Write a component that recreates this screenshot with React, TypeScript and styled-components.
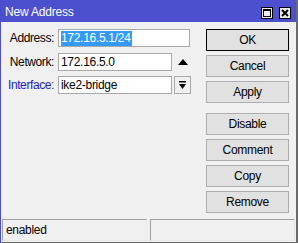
import React from "react";
import styled, { createGlobalStyle } from "styled-components";

const Global = createGlobalStyle`
  html, body { margin: 0; padding: 0; background: #f0f0f0; }
  body { font-family: "Liberation Sans", Arial, sans-serif; font-size: 11px; color: #000; }
`;

const Window = styled.div`
  width: 298px;
  height: 243px;
  box-sizing: border-box;
  background: #f0f0f0;
  border-left: 1px solid #4a4ec9;
  border-right: 2px solid #6a6a6a;
  border-bottom: 1px solid #6a6a6a;
  display: flex;
  flex-direction: column;
  overflow: hidden;
`;

const TitleBar = styled.div`
  height: 22px;
  flex: none;
  background: #4c50cf;
  display: flex;
  align-items: center;
  padding: 0 0 0 5px;
  margin-left: -1px;
  margin-right: -2px;
`;

const Title = styled.div`
  flex: 1;
  color: #fff;
  font-size: 12px;
  letter-spacing: -0.2px;
  padding-top: 1px;
`;

const TitleButtons = styled.div`
  display: flex;
  gap: 6px;
  margin-right: 7px;
  margin-top: 3px;
`;

const TitleButton = styled.div`
  width: 10px;
  height: 10px;
  border: 1px solid #000;
  background: #ececec;
  display: flex;
  align-items: center;
  justify-content: center;
`;

const Body = styled.div`
  flex: 1;
  display: flex;
  padding: 7px 0 0 0;
`;

const Form = styled.div`
  width: 203px;
  display: flex;
  flex-direction: column;
  gap: 5.5px;
`;

const Row = styled.div`
  display: flex;
  align-items: center;
  height: 18px;
`;

const Label = styled.div<{ $link?: boolean }>`
  width: 53px;
  padding-right: 4px;
  text-align: right;
  color: ${(p) => (p.$link ? "#1c1cc8" : "#000")};
  font-size: 12px;
  letter-spacing: -0.4px;
`;

const Field = styled.div<{ $w: number }>`
  width: ${(p) => p.$w}px;
  height: 18px;
  box-sizing: border-box;
  border: 1px solid #a9a9a9;
  background: #fff;
  display: flex;
  align-items: center;
  padding-left: 2px;
  font-size: 12px;
  letter-spacing: -0.3px;
`;

const Selected = styled.span`
  background: #3399ff;
  color: #fff;
  padding: 0 1px 1px 0;
`;

const Side = styled.div`
  width: 18px;
  height: 18px;
  margin-left: 2px;
  display: flex;
  align-items: center;
  justify-content: center;
`;

const DropButton = styled(Side)`
  box-sizing: border-box;
  border: 1px solid #a9a9a9;
  background: #f0f0f0;
  width: 17px;
`;

const Buttons = styled.div`
  width: 83px;
  margin-left: 2px;
  display: flex;
  flex-direction: column;
  gap: 4px;
`;

const Button = styled.div<{ $default?: boolean; $groupStart?: boolean }>`
  height: 22px;
  box-sizing: border-box;
  border: 1px solid ${(p) => (p.$default ? "#000" : "#adadad")};
  background: #e1e1e1;
  display: flex;
  align-items: center;
  justify-content: center;
  font-size: 12px;
  letter-spacing: -0.3px;
  margin-top: ${(p) => (p.$groupStart ? "6px" : "0")};
`;

const StatusBar = styled.div`
  flex: none;
  height: 22px;
  display: flex;
  gap: 3px;
  padding: 0 1px 1px 1px;
`;

const StatusCell = styled.div`
  flex: 1;
  box-sizing: border-box;
  border-top: 1px solid #a0a0a0;
  border-left: 1px solid #a0a0a0;
  border-bottom: 1px solid #e8e8e8;
  border-right: 1px solid #e8e8e8;
  display: flex;
  align-items: center;
  padding-left: 3px;
  font-size: 12px;
  letter-spacing: -0.3px;
`;

export default function App() {
  return (
    <>
      <Global />
      <Window>
        <TitleBar>
          <Title>New Address</Title>
          <TitleButtons>
            <TitleButton>
              <svg width="8" height="8" viewBox="0 0 8 8">
                <rect x="0.5" y="0.5" width="7" height="7" fill="none" stroke="#000" />
                <rect x="0" y="0" width="8" height="2" fill="#000" />
              </svg>
            </TitleButton>
            <TitleButton>
              <svg width="8" height="8" viewBox="0 0 8 8">
                <path d="M1 1 L7 7 M7 1 L1 7" stroke="#000" strokeWidth="2" />
              </svg>
            </TitleButton>
          </TitleButtons>
        </TitleBar>
        <Body>
          <Form>
            <Row>
              <Label>Address:</Label>
              <Field $w={132}>
                <Selected>172.16.5.1/24</Selected>
              </Field>
            </Row>
            <Row>
              <Label>Network:</Label>
              <Field $w={114}>172.16.5.0</Field>
              <Side>
                <svg width="10" height="6" viewBox="0 0 10 6">
                  <path d="M5 0 L10 6 L0 6 Z" fill="#000" />
                </svg>
              </Side>
            </Row>
            <Row>
              <Label $link>Interface:</Label>
              <Field $w={114}>ike2-bridge</Field>
              <DropButton>
                <svg width="7" height="8" viewBox="0 0 7 8">
                  <rect x="0" y="0" width="7" height="1.5" fill="#000" />
                  <path d="M0 3 L7 3 L3.5 8 Z" fill="#000" />
                </svg>
              </DropButton>
            </Row>
          </Form>
          <Buttons>
            <Button $default>OK</Button>
            <Button>Cancel</Button>
            <Button>Apply</Button>
            <Button $groupStart>Disable</Button>
            <Button>Comment</Button>
            <Button>Copy</Button>
            <Button>Remove</Button>
          </Buttons>
        </Body>
        <StatusBar>
          <StatusCell>enabled</StatusCell>
          <StatusCell />
        </StatusBar>
      </Window>
    </>
  );
}
